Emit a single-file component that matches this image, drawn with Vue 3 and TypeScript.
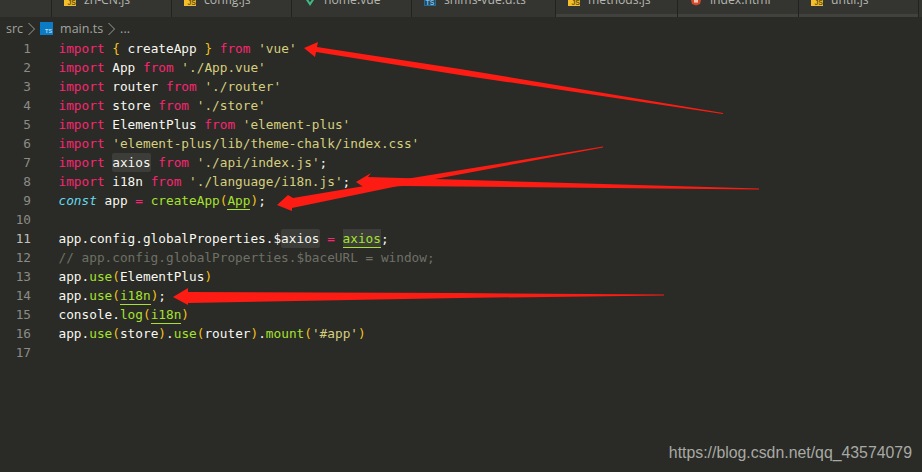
<script setup lang="ts">
type Seg = { t: string; c?: string };
const K = 'k', W = 'w', S = 's', Y = 'y', F = 'f', H = 'h', U = 'u', G = 'g', C = 'c';
const seg = (t: string, c = W): Seg => ({ t, c });

const lines: Seg[][] = [
  [seg('import', K), seg(' '), seg('{', Y), seg(' createApp '), seg('}', Y), seg(' '), seg('from', K), seg(' '), seg("'vue'", S)],
  [seg('import', K), seg(' App '), seg('from', K), seg(' '), seg("'./App.vue'", S)],
  [seg('import', K), seg(' router '), seg('from', K), seg(' '), seg("'./router'", S)],
  [seg('import', K), seg(' store '), seg('from', K), seg(' '), seg("'./store'", S)],
  [seg('import', K), seg(' ElementPlus '), seg('from', K), seg(' '), seg("'element-plus'", S)],
  [seg('import', K), seg(' '), seg("'element-plus/lib/theme-chalk/index.css'", S)],
  [seg('import', K), seg(' '), seg('axios', H), seg(' '), seg('from', K), seg(' '), seg("'./api/index.js'", S), seg(';')],
  [seg('import', K), seg(' i18n '), seg('from', K), seg(' '), seg("'./language/i18n.js'", S), seg(';')],
  [seg('const', C), seg(' app '), seg('=', K), seg(' '), seg('createApp', F), seg('(', Y), seg('App', U), seg(')', Y), seg(';')],
  [],
  [seg('app.config.globalProperties.$'), seg('axios', H), seg(' '), seg('=', K), seg(' '), seg('axios', U + ' ub'), seg(';')],
  [seg('// app.config.globalProperties.$baceURL = window;', G)],
  [seg('app.'), seg('use', F), seg('(', Y), seg('ElementPlus'), seg(')', Y)],
  [seg('app.'), seg('use', F), seg('(', Y), seg('i18n', U), seg(')', Y), seg(';')],
  [seg('console.'), seg('log', F), seg('(', Y), seg('i18n', U), seg(')', Y)],
  [seg('app.'), seg('use', F), seg('(', Y), seg('store'), seg(')', Y), seg('.'), seg('use', F), seg('(', Y), seg('router'), seg(')', Y), seg('.'), seg('mount', F), seg('(', Y), seg("'#app'", S), seg(')', Y)],
  [],
];

const tabs = [
  { name: 'zh-CN.js', icon: 'js', w: 120 },
  { name: 'config.js', icon: 'js', w: 120 },
  { name: 'home.vue', icon: 'vue', w: 120 },
  { name: 'shims-vue.d.ts', icon: 'ts', w: 144 },
  { name: 'methods.js', icon: 'js', w: 122 },
  { name: 'index.html', icon: 'html', w: 121 },
  { name: 'until.js', icon: 'js', w: 120 },
];

const arrows = [
  '304,48 318,42 317,47 460,69 723,113 723,114 460,75 316,52 315,57',
  '603,146.6 603,147.4 403,185 292,208 292,211 277,205 288,195 293,198 412,178',
  '356,182 371,173 368,177 759,188.6 759,189.4 403,186 365,188',
  '173,297 188,288 188,292 460,293 664,294.6 664,295.4 460,298 188,303 188,305',
];
</script>

<template>
  <div class="window">
    <div class="tabs">
      <div class="gutter-tab"></div>
      <div
        v-for="(tab, i) in tabs"
        :key="tab.name"
        class="tab"
        :class="{ worn: i >= 4 }"
        :style="{ width: tab.w + 'px' }"
      >
        <span class="tab-icon" :class="tab.icon">
          <template v-if="tab.icon === 'js'">JS</template>
          <template v-else-if="tab.icon === 'ts'">TS</template>
          <svg v-else-if="tab.icon === 'vue'" viewBox="0 0 12 6" width="12" height="6"><path d="M2 0 L6 6 L10 0 L7.6 0 L6 2.2 L4.4 0 Z" fill="#41b883" /></svg>
          <svg v-else viewBox="0 0 12 6" width="12" height="6"><path d="M1 0 L2 4 L6 5.5 L10 4 L11 0 Z" fill="#d9472b" /><rect x="4" y="0" width="4" height="2.6" fill="#f0c8b8" /></svg>
        </span>
        <span class="tab-name">{{ tab.name }}</span>
      </div>
      <div class="tab-rest"></div>
    </div>

    <div class="crumbs">
      <span>src</span>
      <svg class="chev" viewBox="0 0 7 14" width="7" height="14"><path d="M0.5 1 L6.5 7 L0.5 13" fill="none" stroke="#9a9a96" stroke-width="1" /></svg>
      <span class="ts-badge">TS</span>
      <span>main.ts</span>
      <svg class="chev" viewBox="0 0 7 14" width="7" height="14"><path d="M0.5 1 L6.5 7 L0.5 13" fill="none" stroke="#9a9a96" stroke-width="1" /></svg>
      <span>...</span>
    </div>

    <div class="code">
      <div v-for="(line, i) in lines" :key="i" class="line">
        <span class="num" :class="{ active: i === 10 }">{{ i + 1 }}</span>
        <span class="text"><span v-for="(s, j) in line" :key="j" :class="s.c">{{ s.t }}</span></span>
      </div>
    </div>

    <svg class="arrows" viewBox="0 0 922 472" width="922" height="472">
      <polygon v-for="(p, i) in arrows" :key="i" :points="p" fill="#fd1c13" />
    </svg>

    <div class="mark">https://blog.csdn.net/qq_43574079</div>
  </div>
</template>

<style>
html, body { margin: 0; background: #2a2b26; }
</style>

<style scoped>
.window {
  position: relative;
  width: 922px;
  height: 472px;
  overflow: hidden;
  background: #2a2b26;
  display: flex;
  flex-direction: column;
}
.tabs {
  display: flex;
  height: 17px;
  flex: none;
  background: #343530;
}
.gutter-tab { width: 51px; flex: none; background: #343530; }
.tab-rest { flex: 1; border-left: 1px solid #222320; }
.tab {
  flex: none;
  box-sizing: border-box;
  height: 17px;
  border-left: 1px solid #222320;
  background: #343530;
  position: relative;
  overflow: hidden;
  padding: 0 0 0 12px;
  display: flex;
  align-items: flex-start;
}
.tab.worn::after {
  content: "";
  position: absolute;
  left: 0;
  right: 0;
  bottom: 0;
  height: 3px;
  background: #41423d;
}
.tab-icon {
  width: 12px;
  height: 6px;
  flex: none;
  display: block;
  font: bold 7px/6px "Liberation Sans", sans-serif;
  text-align: right;
  overflow: hidden;
  margin-right: 8px;
}
.tab-icon.js { background: #f4bf2c; color: #6a5410; }
.tab-icon.ts {
  box-sizing: border-box;
  background: #24475c;
  color: #7dbde0;
  border: 1px solid #1d6f9e;
  border-top: 0;
  line-height: 5px;
  text-align: center;
}
.tab-name {
  font: 12.2px/14px "Open Sans", "Liberation Sans", sans-serif;
  color: #b5b6b0;
  white-space: nowrap;
  margin-top: -7px;
}
.crumbs {
  height: 22px;
  flex: none;
  box-sizing: border-box;
  padding: 1px 0 0 6px;
  display: flex;
  align-items: center;
  gap: 5px;
  font: 12.5px/21px "Open Sans", "Liberation Sans", sans-serif;
  color: #a2a39e;
}
.ts-badge {
  width: 13px;
  height: 13px;
  background: #0a7bc4;
  color: #b9dcf2;
  font: bold 5.5px/6px "Liberation Sans", sans-serif;
  display: flex;
  align-items: flex-end;
  justify-content: flex-end;
  padding: 0 1px 1px 0;
  box-sizing: border-box;
  margin-right: 2px;
}
.code {
  font: 12.75px/19px "DejaVu Sans Mono", monospace;
  color: #f8f8f2;
  flex: 1;
}
.line {
  height: 19px;
  display: flex;
  white-space: pre;
}
.num {
  width: 31px;
  flex: none;
  text-align: right;
  color: #8b8c87;
  margin-right: 27.5px;
}
.num.active { color: #c2c2be; }
.text { display: block; }
.k { color: #f92672; }
.w { color: #f8f8f2; }
.s { color: #d6cf7f; }
.y { color: #f2c21b; }
.f { color: #a6e22e; }
.g { color: #6f7066; }
.h {
  display: inline-block;
  height: 19px;
  border-radius: 2px;
  background: #3c3d39;
  color: #f8f8f2;
}
.u {
  display: inline-block;
  box-sizing: border-box;
  height: 19px;
  color: #a6e22e;
  border-bottom: 1px solid #a6e22e;
}
.ub { background: #3c3d39; }
.c { color: #66d9ef; font-style: italic; }
.arrows {
  position: absolute;
  left: 0;
  top: 0;
  pointer-events: none;
}
.mark {
  position: absolute;
  right: 10px;
  top: 444px;
  font: 15.85px/18px "Liberation Sans", sans-serif;
  color: #a8a9a5;
}
</style>
